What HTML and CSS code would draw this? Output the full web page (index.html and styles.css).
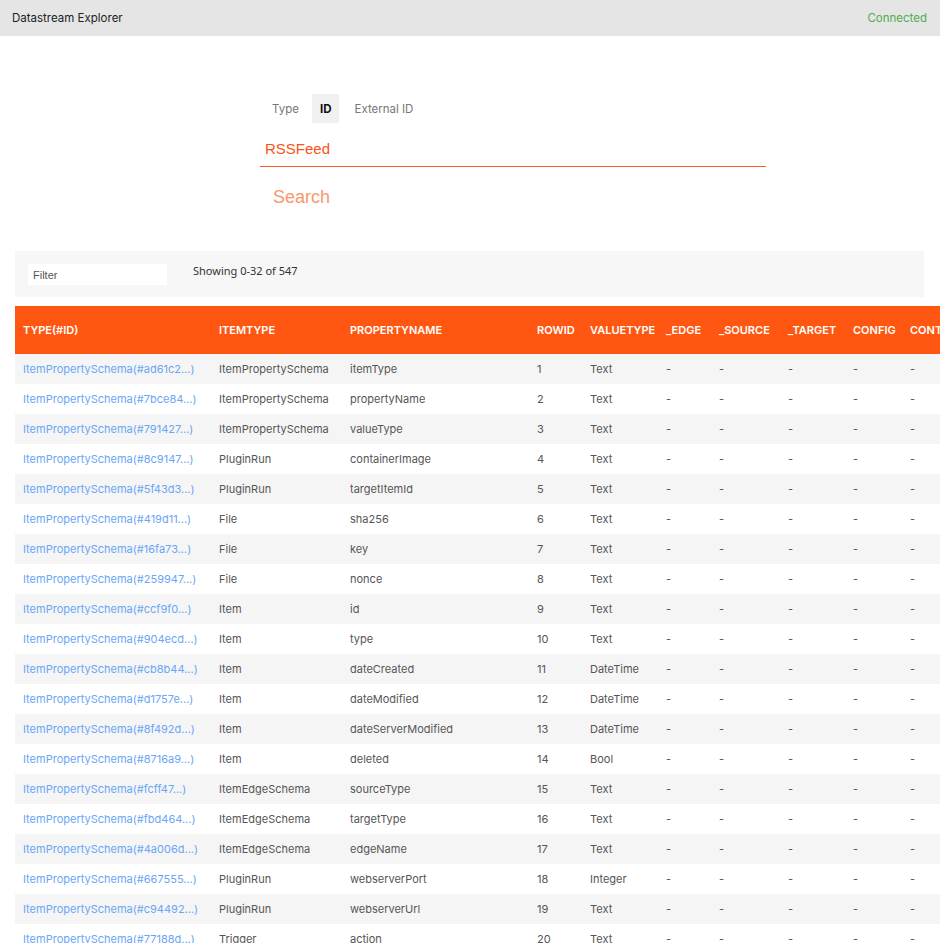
FILE: index.html
```html
<!DOCTYPE html>
<html>
<head>
<meta charset="utf-8">
<link rel="stylesheet" href="styles.css">
</head>
<body>
<div class="app">
  <header class="topbar">
    <span class="title">Datastream Explorer</span>
    <span class="status">Connected</span>
  </header>
  <section class="search">
    <div class="tabs">
      <span class="tab">Type</span>
      <span class="tab active">ID</span>
      <span class="tab">External ID</span>
    </div>
    <div class="query">RSSFeed</div>
    <div class="search-btn">Search</div>
  </section>
  <section class="filterbar">
    <div class="filter">Filter</div>
    <div class="showing">Showing 0-32 of 547</div>
  </section>
  <div class="tablewrap">
    <table class="grid">
      <colgroup>
        <col class="c1"><col class="c2"><col class="c3"><col class="c4"><col class="c5"><col class="c6"><col class="c7"><col class="c8"><col class="c9"><col class="c10">
      </colgroup>
      <thead>
        <tr><th>TYPE(#ID)</th><th>ITEMTYPE</th><th>PROPERTYNAME</th><th>ROWID</th><th>VALUETYPE</th><th>_EDGE</th><th>_SOURCE</th><th>_TARGET</th><th>CONFIG</th><th>CONTAINER</th></tr>
      </thead>
      <tbody>
        <tr><td class="link">ItemPropertySchema(#ad61c2...)</td><td>ItemPropertySchema</td><td>itemType</td><td>1</td><td>Text</td><td>-</td><td>-</td><td>-</td><td>-</td><td>-</td></tr>
        <tr><td class="link">ItemPropertySchema(#7bce84...)</td><td>ItemPropertySchema</td><td>propertyName</td><td>2</td><td>Text</td><td>-</td><td>-</td><td>-</td><td>-</td><td>-</td></tr>
        <tr><td class="link">ItemPropertySchema(#791427...)</td><td>ItemPropertySchema</td><td>valueType</td><td>3</td><td>Text</td><td>-</td><td>-</td><td>-</td><td>-</td><td>-</td></tr>
        <tr><td class="link">ItemPropertySchema(#8c9147...)</td><td>PluginRun</td><td>containerImage</td><td>4</td><td>Text</td><td>-</td><td>-</td><td>-</td><td>-</td><td>-</td></tr>
        <tr><td class="link">ItemPropertySchema(#5f43d3...)</td><td>PluginRun</td><td>targetItemId</td><td>5</td><td>Text</td><td>-</td><td>-</td><td>-</td><td>-</td><td>-</td></tr>
        <tr><td class="link">ItemPropertySchema(#419d11...)</td><td>File</td><td>sha256</td><td>6</td><td>Text</td><td>-</td><td>-</td><td>-</td><td>-</td><td>-</td></tr>
        <tr><td class="link">ItemPropertySchema(#16fa73...)</td><td>File</td><td>key</td><td>7</td><td>Text</td><td>-</td><td>-</td><td>-</td><td>-</td><td>-</td></tr>
        <tr><td class="link">ItemPropertySchema(#259947...)</td><td>File</td><td>nonce</td><td>8</td><td>Text</td><td>-</td><td>-</td><td>-</td><td>-</td><td>-</td></tr>
        <tr><td class="link">ItemPropertySchema(#ccf9f0...)</td><td>Item</td><td>id</td><td>9</td><td>Text</td><td>-</td><td>-</td><td>-</td><td>-</td><td>-</td></tr>
        <tr><td class="link">ItemPropertySchema(#904ecd...)</td><td>Item</td><td>type</td><td>10</td><td>Text</td><td>-</td><td>-</td><td>-</td><td>-</td><td>-</td></tr>
        <tr><td class="link">ItemPropertySchema(#cb8b44...)</td><td>Item</td><td>dateCreated</td><td>11</td><td>DateTime</td><td>-</td><td>-</td><td>-</td><td>-</td><td>-</td></tr>
        <tr><td class="link">ItemPropertySchema(#d1757e...)</td><td>Item</td><td>dateModified</td><td>12</td><td>DateTime</td><td>-</td><td>-</td><td>-</td><td>-</td><td>-</td></tr>
        <tr><td class="link">ItemPropertySchema(#8f492d...)</td><td>Item</td><td>dateServerModified</td><td>13</td><td>DateTime</td><td>-</td><td>-</td><td>-</td><td>-</td><td>-</td></tr>
        <tr><td class="link">ItemPropertySchema(#8716a9...)</td><td>Item</td><td>deleted</td><td>14</td><td>Bool</td><td>-</td><td>-</td><td>-</td><td>-</td><td>-</td></tr>
        <tr><td class="link">ItemPropertySchema(#fcff47...)</td><td>ItemEdgeSchema</td><td>sourceType</td><td>15</td><td>Text</td><td>-</td><td>-</td><td>-</td><td>-</td><td>-</td></tr>
        <tr><td class="link">ItemPropertySchema(#fbd464...)</td><td>ItemEdgeSchema</td><td>targetType</td><td>16</td><td>Text</td><td>-</td><td>-</td><td>-</td><td>-</td><td>-</td></tr>
        <tr><td class="link">ItemPropertySchema(#4a006d...)</td><td>ItemEdgeSchema</td><td>edgeName</td><td>17</td><td>Text</td><td>-</td><td>-</td><td>-</td><td>-</td><td>-</td></tr>
        <tr><td class="link">ItemPropertySchema(#667555...)</td><td>PluginRun</td><td>webserverPort</td><td>18</td><td>Integer</td><td>-</td><td>-</td><td>-</td><td>-</td><td>-</td></tr>
        <tr><td class="link">ItemPropertySchema(#c94492...)</td><td>PluginRun</td><td>webserverUrl</td><td>19</td><td>Text</td><td>-</td><td>-</td><td>-</td><td>-</td><td>-</td></tr>
        <tr><td class="link">ItemPropertySchema(#77188d...)</td><td>Trigger</td><td>action</td><td>20</td><td>Text</td><td>-</td><td>-</td><td>-</td><td>-</td><td>-</td></tr>
      </tbody>
    </table>
  </div>
</div>
</body>
</html>
```
FILE: styles.css
```css
html, body {
  margin: 0;
  padding: 0;
  overflow: hidden;
  background: #fff;
}
.app {
  width: 940px;
  overflow: hidden;
  font-family: "Inter", "Liberation Sans", sans-serif;
  color: #333;
}
.topbar {
  height: 36px;
  background: #e5e5e5;
  display: flex;
  align-items: center;
  justify-content: space-between;
  padding: 0 13px 0 12px;
  font-size: 11.5px;
}
.title { color: #222; }
.status { color: #4caf50; }
.search {
  width: 506px;
  margin: 58px 0 0 260px;
  display: flex;
  flex-direction: column;
}
.tabs {
  display: flex;
  padding-left: 4px;
}
.tab {
  height: 29px;
  line-height: 31px;
  padding: 0 8px;
  font-size: 11.5px;
  color: #777;
}
.tab.active {
  background: #f0f0f0;
  color: #111;
  font-weight: 700;
  padding: 0 8px;
  margin: 0 7px 0 5px;
}
.query {
  margin-top: 8px;
  height: 35px;
  border-bottom: 1px solid #f06027;
  padding-left: 5px;
  font-family: "Liberation Sans", Arial, sans-serif;
  font-size: 15px;
  line-height: 36px;
  color: #fa5216;
}
.search-btn {
  margin-top: 17px;
  padding-left: 13px;
  font-family: "Liberation Sans", Arial, sans-serif;
  font-size: 18px;
  color: #f8986c;
  height: 25px;
  line-height: 27px;
}
.filterbar {
  margin: 42px 0 0 15px;
  width: 909px;
  height: 46px;
  background: #f7f7f7;
  display: flex;
  align-items: center;
  padding-left: 13px;
  box-sizing: border-box;
}
.filter {
  width: 139px;
  height: 21px;
  background: #fff;
  font-family: "Liberation Sans", Arial, sans-serif;
  font-size: 11px;
  line-height: 22px;
  color: #555;
  padding-left: 5px;
  box-sizing: border-box;
  margin-top: 1px;
}
.showing {
  margin-left: 26px;
  margin-top: -7px;
  font-family: "Noto Sans", sans-serif;
  font-size: 11px;
  color: #333;
}
.tablewrap {
  margin: 9px 0 0 15px;
}
.grid {
  border-collapse: collapse;
  table-layout: fixed;
  width: 1000px;
  font-size: 11px;
}
.c1 { width: 196px; }
.c2 { width: 131px; }
.c3 { width: 187px; }
.c4 { width: 53px; }
.c5 { width: 76px; }
.c6 { width: 53px; }
.c7 { width: 69px; }
.c8 { width: 65px; }
.c9 { width: 57px; }
.c10 { width: 113px; }
.grid th {
  background: #ff5711;
  color: #fff;
  font-weight: 600;
  text-align: left;
  height: 48px;
  padding: 0 8px;
  white-space: nowrap;
  overflow: hidden;
}
.grid td {
  height: 30px;
  padding: 0 8px;
  color: #555;
  white-space: nowrap;
  overflow: hidden;
}
.grid tbody tr:nth-child(odd) td { background: #f5f5f5; }
.grid td.link { color: #69a6f5; }
```
